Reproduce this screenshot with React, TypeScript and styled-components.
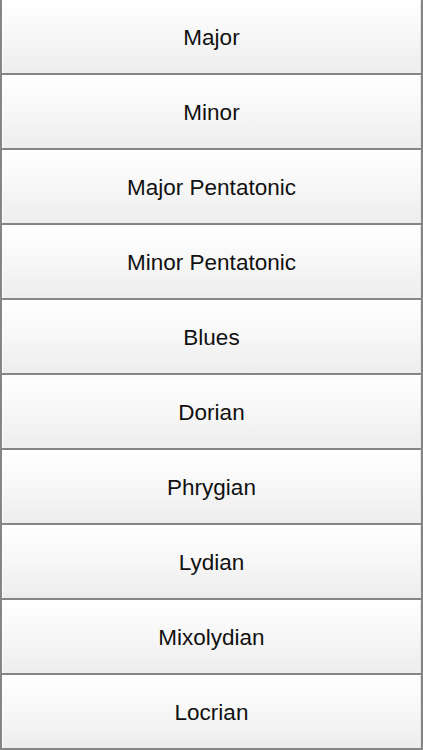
import React from 'react';
import styled, { createGlobalStyle } from 'styled-components';

const GlobalStyle = createGlobalStyle`
  html, body {
    margin: 0;
    padding: 0;
    background: #ffffff;
  }
`;

const StyledList = styled.div`
  display: flex;
  flex-direction: column;
  width: 423px;
  height: 750px;
  box-sizing: border-box;
`;

const StyledRow = styled.button`
  display: flex;
  align-items: center;
  justify-content: center;
  height: 75px;
  width: 100%;
  box-sizing: border-box;
  margin: 0;
  padding: 2px 0 0 0;
  border: 2px solid #858585;
  border-top: none;
  box-shadow: inset 1px 1px 0 #ffffff, inset -1px 0 0 #e4e4e4;
  background: linear-gradient(to bottom, #ffffff 0%, #f7f7f7 50%, #ededed 100%);
  font-family: 'Liberation Sans', Arial, sans-serif;
  font-size: 22.5px;
  color: #111111;
  cursor: pointer;
  :active {
    background: #dcdcdc;
  }
`;

const scales = [
  'Major',
  'Minor',
  'Major Pentatonic',
  'Minor Pentatonic',
  'Blues',
  'Dorian',
  'Phrygian',
  'Lydian',
  'Mixolydian',
  'Locrian'
];

const App: React.FC = () => {
  return (
    <>
      <GlobalStyle />
      <StyledList>
        {scales.map(name => (
          <StyledRow key={name}>{name}</StyledRow>
        ))}
      </StyledList>
    </>
  );
};

export default App;
